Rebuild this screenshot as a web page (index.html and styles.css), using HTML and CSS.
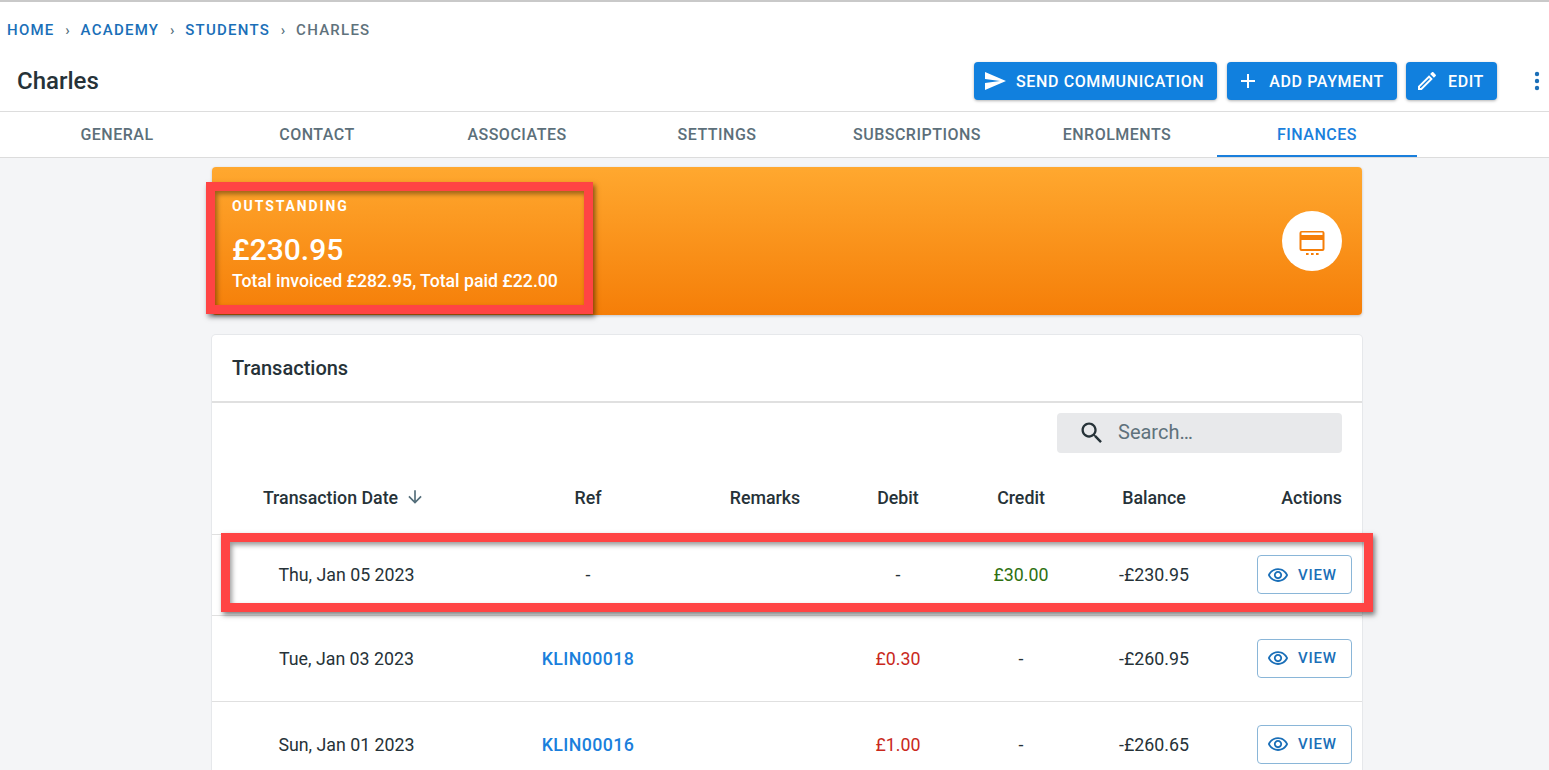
FILE: index.html
```html
<!DOCTYPE html>
<html lang="en">
<head>
  <meta charset="UTF-8">
  <meta name="viewport" content="width=device-width, initial-scale=1.0">
  <title>Charles - Finances</title>
  <link rel="stylesheet" href="styles.css">
</head>
<body>
  <div class="page-header">
    <nav class="breadcrumbs">
      <a href="#">Home</a><span class="sep">›</span>
      <a href="#">Academy</a><span class="sep">›</span>
      <a href="#">Students</a><span class="sep">›</span>
      <span class="current">Charles</span>
    </nav>
    <div class="title-row">
      <h1>Charles</h1>
      <div class="actions">
        <button class="btn btn-send" type="button">
          <svg width="24" height="24" viewBox="0 0 24 24" fill="currentColor"><path d="M2.01 21L23 12 2.01 3 2 10l15 2-15 2z"/></svg>
          Send Communication
        </button>
        <button class="btn btn-add" type="button">
          <svg width="24" height="24" viewBox="0 0 24 24" fill="currentColor"><path d="M19 13h-6v6h-2v-6H5v-2h6V5h2v6h6v2z"/></svg>
          Add Payment
        </button>
        <button class="btn" type="button">
          <svg width="24" height="24" viewBox="0 0 24 24" fill="currentColor"><path d="M14.06 9.02l.92.92L5.92 19H5v-.92l9.06-9.06M17.66 3c-.25 0-.51.1-.7.29l-1.83 1.83 3.75 3.75 1.83-1.83c.39-.39.39-1.02 0-1.41l-2.34-2.34c-.2-.2-.45-.29-.71-.29zm-3.6 3.19L3 17.25V21h3.75L17.81 9.94l-3.75-3.75z"/></svg>
          Edit
        </button>
        <svg class="more" width="24" height="24" viewBox="0 0 24 24" fill="currentColor"><circle cx="12" cy="5" r="2.2"/><circle cx="12" cy="12" r="2.2"/><circle cx="12" cy="19" r="2.2"/></svg>
      </div>
    </div>
    <div class="tabs">
      <a class="tab" href="#">General</a>
      <a class="tab" href="#">Contact</a>
      <a class="tab" href="#">Associates</a>
      <a class="tab" href="#">Settings</a>
      <a class="tab" href="#">Subscriptions</a>
      <a class="tab" href="#">Enrolments</a>
      <a class="tab active" href="#">Finances</a>
    </div>
  </div>

  <main class="content">
    <section class="summary">
      <div class="summary-text">
        <div class="summary-label">Outstanding</div>
        <div class="summary-amount">£230.95</div>
        <div class="summary-note">Total invoiced £282.95, Total paid £22.00</div>
      </div>
      <div class="summary-icon">
        <svg width="28" height="28" viewBox="0 0 28 28" fill="currentColor">
          <path fill-rule="evenodd" d="M3.5 4h21a2 2 0 0 1 2 2v16a2 2 0 0 1-2 2h-21a2 2 0 0 1-2-2V6a2 2 0 0 1 2-2zM3.500 5.500V8h21V5.500zM3.500 13v9h21v-9z"/>
          <rect x="8" y="26" width="2.600" height="2.400"/><rect x="13" y="26" width="2.600" height="2.400"/><rect x="18" y="26" width="2.600" height="2.400"/>
        </svg>
      </div>
    </section>

    <section class="card">
      <h2 class="card-title">Transactions</h2>
      <div class="toolbar">
        <div class="search">
          <svg width="28" height="28" viewBox="0 0 24 24" fill="currentColor"><path d="M15.5 14h-.79l-.28-.27C15.41 12.59 16 11.11 16 9.5 16 5.91 13.09 3 9.5 3S3 5.91 3 9.5 5.910 16 9.5 16c1.610 0 3.090-.59 4.230-1.570l.27.28v.79l5 4.990L20.490 19l-4.990-5zm-6 0C7.010 14 5 11.990 5 9.500S7.010 5 9.500 5 14 7.010 14 9.500 11.990 14 9.500 14z"/></svg>
          <span>Search…</span>
        </div>
      </div>
      <table class="transactions">
        <thead>
          <tr>
            <th><span class="sort">Transaction Date
              <svg width="20" height="20" viewBox="0 0 24 24" fill="currentColor"><path d="M20 12l-1.410-1.410L13 16.170V4h-2v12.170l-5.580-5.590L4 12l8 8 8-8z"/></svg></span></th>
            <th>Ref</th>
            <th>Remarks</th>
            <th>Debit</th>
            <th>Credit</th>
            <th>Balance</th>
            <th class="col-actions">Actions</th>
          </tr>
        </thead>
        <tbody>
          <tr class="row-short">
            <td>Thu, Jan 05 2023</td>
            <td>-</td>
            <td></td>
            <td>-</td>
            <td class="credit">£30.00</td>
            <td>-£230.95</td>
            <td class="col-actions"><button class="view" type="button">
              <svg width="22" height="22" viewBox="0 0 24 24" fill="currentColor"><path d="M12 6.500c3.790 0 7.170 2.130 8.820 5.500-1.650 3.370-5.020 5.500-8.820 5.500S4.830 15.370 3.180 12C4.830 8.630 8.210 6.500 12 6.500m0-2C7 4.500 2.730 7.610 1 12c1.730 4.390 6 7.500 11 7.500s9.270-3.110 11-7.500c-1.730-4.390-6-7.500-11-7.500zm0 5c1.380 0 2.500 1.120 2.500 2.500s-1.120 2.500-2.500 2.500-2.500-1.120-2.500-2.500 1.120-2.500 2.500-2.500m0-2c-2.480 0-4.500 2.020-4.500 4.500s2.020 4.500 4.500 4.500 4.500-2.020 4.500-4.500-2.020-4.500-4.500-4.500z"/></svg>
              View</button></td>
          </tr>
          <tr>
            <td>Tue, Jan 03 2023</td>
            <td><a class="ref" href="#">KLIN00018</a></td>
            <td></td>
            <td class="debit">£0.30</td>
            <td>-</td>
            <td>-£260.95</td>
            <td class="col-actions"><button class="view" type="button">
              <svg width="22" height="22" viewBox="0 0 24 24" fill="currentColor"><path d="M12 6.500c3.790 0 7.170 2.130 8.820 5.500-1.650 3.370-5.020 5.500-8.820 5.500S4.830 15.370 3.180 12C4.830 8.630 8.210 6.500 12 6.500m0-2C7 4.500 2.730 7.610 1 12c1.730 4.390 6 7.500 11 7.500s9.270-3.110 11-7.500c-1.730-4.390-6-7.500-11-7.500zm0 5c1.380 0 2.500 1.120 2.500 2.500s-1.120 2.500-2.500 2.500-2.500-1.120-2.500-2.500 1.120-2.500 2.500-2.500m0-2c-2.480 0-4.500 2.020-4.500 4.500s2.020 4.500 4.500 4.500 4.500-2.020 4.500-4.500-2.020-4.500-4.500-4.500z"/></svg>
              View</button></td>
          </tr>
          <tr>
            <td>Sun, Jan 01 2023</td>
            <td><a class="ref" href="#">KLIN00016</a></td>
            <td></td>
            <td class="debit">£1.00</td>
            <td>-</td>
            <td>-£260.65</td>
            <td class="col-actions"><button class="view" type="button">
              <svg width="22" height="22" viewBox="0 0 24 24" fill="currentColor"><path d="M12 6.500c3.790 0 7.170 2.130 8.820 5.500-1.650 3.370-5.020 5.500-8.820 5.500S4.830 15.370 3.180 12C4.830 8.630 8.210 6.500 12 6.500m0-2C7 4.500 2.730 7.610 1 12c1.730 4.390 6 7.500 11 7.500s9.270-3.110 11-7.500c-1.730-4.390-6-7.500-11-7.500zm0 5c1.380 0 2.500 1.120 2.500 2.500s-1.120 2.500-2.500 2.500-2.500-1.120-2.500-2.500 1.120-2.500 2.500-2.500m0-2c-2.480 0-4.500 2.020-4.500 4.500s2.020 4.500 4.500 4.500 4.500-2.020 4.500-4.500-2.020-4.500-4.500-4.500z"/></svg>
              View</button></td>
          </tr>
        </tbody>
      </table>
    </section>
  </main>

  <!-- red highlight boxes drawn over the screenshot -->
  <div class="mark mark-summary"></div>
  <div class="mark mark-row"></div>
</body>
</html>
```

FILE: styles.css
```css
* {
  margin: 0;
  padding: 0;
  box-sizing: border-box;
}

html,
body {
  height: 100%;
  overflow: hidden;
}

body {
  position: relative;
  font-family: Roboto, 'Liberation Sans', sans-serif;
  background: #f4f5f7;
  color: #263238;
}

a {
  text-decoration: none;
}

.page-header {
  height: 158px;
  background: white;
  border-top: 2px solid #c9c9c9;
  border-bottom: 1px solid #dcdcdc;
}

.breadcrumbs {
  display: flex;
  align-items: center;
  height: 28px;
  margin-top: 14px;
  padding-left: 7px;
  font-size: 15px;
  font-weight: 500;
  letter-spacing: 1.25px;
  text-transform: uppercase;
}

.breadcrumbs a {
  color: #1a6fb8;
}

.breadcrumbs .sep {
  width: 26px;
  text-align: center;
  color: #546e7a;
  letter-spacing: 0;
}

.breadcrumbs .current {
  color: #5f727c;
}

.title-row {
  display: flex;
  align-items: center;
  justify-content: space-between;
  height: 68px;
  padding: 7px 0 0 17px;
  border-bottom: 1px solid #dddddd;
}

h1 {
  font-size: 24px;
  font-weight: 500;
}

.actions {
  display: flex;
  align-items: center;
}

.btn {
  display: flex;
  align-items: center;
  gap: 9px;
  height: 38px;
  margin-right: 10px;
  padding: 0 13px 0 9px;
  border: none;
  border-radius: 4px;
  background: #1180de;
  color: white;
  font-family: inherit;
  font-size: 16px;
  font-weight: 500;
  letter-spacing: 0.62px;
  text-transform: uppercase;
  box-shadow: 0 1px 3px rgba(0, 0, 0, 0.3);
}

.btn-add {
  margin-right: 9px;
}

.more {
  margin: 0 0 0 18px;
  color: #1a6fb8;
}

.tabs {
  display: flex;
  padding-left: 17px;
}

.tab {
  width: 200px;
  height: 45px;
  line-height: 45px;
  text-align: center;
  color: #5c6f7a;
  font-size: 16px;
  font-weight: 500;
  letter-spacing: 0.5px;
  text-transform: uppercase;
}

.tab.active {
  color: #1a7fdc;
  border-bottom: 2px solid #1a7fdc;
}

.content {
  width: 1150px;
  margin: 9px 0 0 212px;
}

.summary {
  display: flex;
  align-items: center;
  justify-content: space-between;
  height: 148px;
  padding: 0 20px;
  border-radius: 4px;
  background: linear-gradient(180deg, #ffa82f 0%, #f57e08 100%);
  color: white;
  box-shadow: 0 1px 3px rgba(0, 0, 0, 0.2);
}

.summary-text {
  padding-top: 7px;
}

.summary-label {
  font-size: 14px;
  font-weight: 700;
  letter-spacing: 1.9px;
  text-transform: uppercase;
}

.summary-amount {
  margin-top: 18px;
  font-size: 30px;
  font-weight: 500;
  line-height: 36px;
}

.summary-note {
  margin-top: 3px;
  font-size: 17.7px;
  font-weight: 500;
}

.summary-icon {
  display: flex;
  align-items: center;
  justify-content: center;
  width: 60px;
  height: 60px;
  border-radius: 50%;
  background: white;
  color: #f57e08;
}

/* cut off at the window edge, the list carries on below the fold */
.card {
  height: 435px;
  margin-top: 20px;
  overflow: hidden;
  border-radius: 4px 4px 0 0;
  background: white;
  box-shadow: 0 0 0 1px #e6e8eb;
}

.card-title {
  height: 68px;
  padding-left: 20px;
  line-height: 66px;
  font-size: 20px;
  font-weight: 500;
  border-bottom: 2px solid #e0e0e0;
}

.toolbar {
  display: flex;
  justify-content: flex-end;
  padding: 10px 20px 0 0;
}

.search {
  display: flex;
  align-items: center;
  gap: 12px;
  width: 285px;
  height: 40px;
  padding-left: 21px;
  border-radius: 4px;
  background: #e8e9eb;
  color: #5f727c;
  font-size: 20px;
}

.search span {
  margin-bottom: 2px;
}

.search svg {
  color: #263238;
}

.transactions {
  width: 1150px;
  margin-top: 14px;
  border-collapse: collapse;
  table-layout: fixed;
  font-size: 17.8px;
}

.transactions th,
.transactions td {
  text-align: center;
}

.transactions th {
  height: 67px;
  padding-bottom: 6px;
  font-size: 17.8px;
  font-weight: 500;
}

.transactions th:nth-child(1) { width: 238px; padding-left: 26px; }
.transactions th:nth-child(2) { width: 276px; }
.transactions th:nth-child(3) { width: 78px; }
.transactions th:nth-child(4) { width: 188px; }
.transactions th:nth-child(5) { width: 58px; }
.transactions th:nth-child(6) { width: 208px; }

.transactions td:first-child {
  padding-left: 31px;
}

.transactions tbody tr {
  height: 86px;
  border-top: 1px solid #e0e0e0;
}

.transactions tbody tr.row-short {
  height: 81px;
}

.sort {
  display: inline-flex;
  align-items: center;
  gap: 7px;
}

.sort svg {
  color: #546e7a;
}

.transactions .col-actions {
  padding-right: 20px;
  text-align: right;
}

.ref {
  color: #1a7fdc;
  font-weight: 500;
  letter-spacing: 0.4px;
}

.credit {
  color: #2e7012;
}

.debit {
  color: #c9281c;
}

.view {
  display: inline-flex;
  align-items: center;
  gap: 9px;
  width: 95px;
  height: 39px;
  margin-left: -1px;
  padding-left: 9px;
  border: 1px solid #8ab6d8;
  border-radius: 4px;
  background: white;
  color: #1a6fb8;
  font-family: inherit;
  font-size: 15px;
  font-weight: 500;
  letter-spacing: 0.8px;
  text-transform: uppercase;
}

.mark {
  position: absolute;
  border: 9px solid #ff4444;
  box-shadow: 2px 3px 5px rgba(0, 0, 0, 0.5), inset 2px 3px 5px rgba(0, 0, 0, 0.4);
}

.mark-summary {
  left: 206px;
  top: 182px;
  width: 387px;
  height: 132px;
}

.mark-row {
  left: 221px;
  top: 533px;
  width: 1152px;
  height: 79px;
}
```
